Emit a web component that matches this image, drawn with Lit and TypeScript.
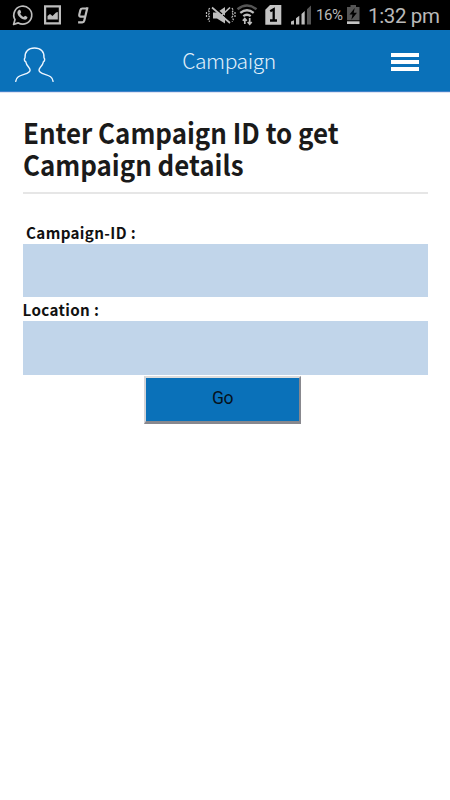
import { LitElement, html, css } from "lit";
import { customElement } from "lit/decorators.js";

@customElement("status-bar")
class StatusBar extends LitElement {
  static styles = css`
    :host {
      display: block;
      height: 30px;
      background: #000;
      color: #b9b9b9;
      font-family: Roboto, sans-serif;
    }
    .bar {
      display: flex;
      height: 30px;
      align-items: center;
      justify-content: space-between;
      padding-right: 10px;
      box-sizing: border-box;
    }
    .right {
      display: flex;
      align-items: center;
      height: 30px;
    }
    svg {
      display: block;
    }
    .percent {
      font-size: 15px;
      line-height: 30px;
      width: 31px;
      white-space: nowrap;
      letter-spacing: -0.4px;
    }
    .time {
      font-size: 20.5px;
      letter-spacing: -0.35px;
      width: 72px;
      line-height: 30px;
      white-space: nowrap;
      padding-top: 1px;
    }
  `;
  render() {
    return html`<div class="bar">
      <svg width="100" height="30" viewBox="0 0 100 30" fill="none" stroke="#bdbdbd">
        <path d="M13.6 24.4 15 19.6A9 9 0 1 1 18.3 22.9Z" stroke-width="1.7" stroke-linejoin="round" />
        <path d="M18.6 10.2c.8-.8 1.5-.6 1.8.1l.8 2-1 1.4c.8 1.6 2 2.7 3.5 3.3l1.4-1.3 2.3 1.2c.3 1.8-1.5 3-3.2 2.7-3.4-.7-6.4-3.7-6.8-6.6-.1-1.1.4-2.1 1.2-2.8Z" fill="#bdbdbd" stroke="none" />
        <path d="M45.1 6.3h14.8v17H45.1Z" stroke-width="2.2" />
        <path d="M47.5 19.5v-3.5l2.5-2 2.5 2 3.5-3.5 1.8-.6v7.6Z" fill="#bdbdbd" stroke="none" />
        <path d="M86.7 8.5h-4.2c-1.200 0-1.800.5-2.100 1.600l-1.100 4.500c-.3 1.400.2 2 1.400 2h4.200M87.5 7.300l-3.200 13.300c-.3 1.200-.9 1.700-2 1.700h-4.200" stroke-width="2.2" />
      </svg>
      <div class="right">
        <svg width="112" height="30" viewBox="204 0 112 30" fill="none" stroke="#bdbdbd">
          <path d="M213 12.500h4l8-5.500v16.500L217 18.600h-4Z" fill="#bdbdbd" stroke="none" />
          <path d="m213.500 6.500 17.500 15.500" stroke="#000" stroke-width="1.500" />
          <path d="m212 7.500 18 15.500M230 7.500l-8 7.500" stroke-width="1.700" />
          <path d="m209.700 8-1.500 2.300 1.500 2.300-1.500 2.400 1.500 2.300-1.500 2.300 1.500 2M206.500 12v6M232 8l1.300 2.300-1.300 2.300 1.300 2.400-1.300 2.300 1.300 2.300-1.300 2M235 12v6" stroke-width="1.200" stroke-dasharray="2 1" />
          <path d="M237.500 9.300q9.500-7.500 19 0" stroke="#555" stroke-width="2.500" />
          <path d="M240.300 12.800q6.700-5.200 13.400 0M243.300 16.200q3.700-2.800 7.400 0" stroke-width="2.300" />
          <path d="M244.800 24v-5.500m-2 2.200 2-2.200 2 2.200M249.700 18v6.200m-2-2.200 2 2.300 2-2.300" stroke-width="1.700" />
          <path d="M270 5h11.300v19.700h-16V9.700Z" fill="#c4c4c4" stroke="none" />
          <path d="m270.200 11.200 3.500-2v11.300m-3.700 0h7" stroke="#000" stroke-width="2.300" />
          <path d="M291 24.500v-3l3-1.300v4.300ZM296 24.500v-6.300l3.300-2.500v8.800ZM301.500 24.500V14l3.200-3v13.500Z" fill="#bdbdbd" stroke="none" />
          <path d="M307 24.500V9.300l4-3.800v19Z" fill="#555" stroke="none" />
        </svg>
        <span class="percent">16%</span>
        <svg width="21" height="30" viewBox="347 0 21 30">
          <path d="M347 7h3.500V5h5.500v2h3.500v13.300H347Z" fill="#555" />
          <path d="M347 21.300h12.500V24H347Z" fill="#c4c4c4" />
          <path d="m354.700 8-5.200 6.500h3l-1.200 5.300 5.700-7h-3.300Z" fill="#000" />
        </svg>
        <span class="time">1:32 pm</span>
      </div>
    </div>`;
  }
}

@customElement("app-root")
class AppRoot extends LitElement {
  static styles = css`
    :host {
      display: block;
      height: 800px;
      overflow: hidden;
      background: #fff;
      color: #1a1a1a;
      font-family: "Noto Sans CJK SC", "Noto Sans", sans-serif;
    }
    .header {
      display: grid;
      grid-template-columns: 1fr auto 1fr;
      align-items: center;
      height: 62px;
      padding: 0 31px 0 14px;
      box-sizing: border-box;
      background: #0a71b9;
      border-bottom: 1px solid #3f83ca;
      box-shadow: 0 1px 0 #dfe3f2;
    }
    .person {
      display: block;
      margin-top: 9px;
    }
    .title {
      color: #e4f0fa;
      font-size: 21px;
      letter-spacing: -0.4px;
      font-weight: 300;
      line-height: 28px;
      white-space: nowrap;
      padding-left: 25px;
      margin-top: -2px;
    }
    .menu {
      justify-self: end;
      display: grid;
      gap: 3px;
      width: 28px;
      margin-top: 2px;
    }
    .menu i {
      height: 4px;
      background: #fff;
    }
    .content {
      padding: 25px 22.5px 0;
    }
    h1 {
      margin: 0;
      height: 77px;
      box-sizing: border-box;
      border-bottom: 2px solid #e6e6e6;
      font-size: 27.6px;
      line-height: 31.5px;
      font-weight: 700;
      white-space: nowrap;
    }
    .line {
      display: block;
      width: max-content;
      transform: scaleX(0.938);
      transform-origin: left;
    }
    label {
      display: block;
      height: 24px;
      line-height: 24px;
      font-size: 15.2px;
      letter-spacing: 0.35px;
      font-weight: 700;
      color: #111;
      white-space: nowrap;
    }
    .first {
      margin-top: 26px;
      padding-left: 3.5px;
    }
    input {
      display: block;
      width: 405px;
      height: 53px;
      margin: 0;
      padding: 0 10px;
      box-sizing: border-box;
      border: 0;
      border-radius: 0;
      background: #c1d5ea;
    }
    .second {
      height: 54px;
    }
    button {
      display: block;
      width: 157px;
      height: 48px;
      margin: 1px 0 0 121.5px;
      padding: 0 0 4px;
      box-sizing: border-box;
      border: 2px solid;
      border-width: 2px 2px 3px 2px;
      border-color: #dcdcdc #88888e #88888e #d4d4d8;
      border-radius: 0;
      background: #0a71b9;
      color: #06121c;
      font: 17.5px Roboto, sans-serif;
      letter-spacing: -0.5px;
    }
  `;
  render() {
    return html`
      <status-bar></status-bar>
      <header class="header">
        <svg class="person" width="42" height="38" viewBox="14 47 42 38" fill="none" stroke="#eef6ff" stroke-width="1.4" stroke-linecap="round">
          <path d="M15.7 82.3C16.5 76.5 22 76.5 27 74.3c3.500-1.600 4-3.200 1.700-6-2-2.300-2.600-3.800-2.900-5.500-1.700-.8-1.800-3-.8-4C24.700 52.500 28.500 49 34.500 49s10 3.500 9.500 9.800c1 1 .9 3.200-.6 4-.3 1.700-.9 3.200-3 5.500-2.300 2.800-1.800 4.400 1.700 6 5 2.200 10.300 2.200 11 8" />
        </svg>
        <span class="title">Campaign</span>
        <span class="menu"><i></i><i></i><i></i></span>
      </header>
      <main class="content">
        <h1><span class="line">Enter Campaign ID to get</span><span class="line">Campaign details</span></h1>
        <label class="first" for="campaign">Campaign-ID :</label>
        <input id="campaign" type="text" />
        <label for="location">Location :</label>
        <input class="second" id="location" type="text" />
        <button type="button">Go</button>
      </main>
    `;
  }
}
